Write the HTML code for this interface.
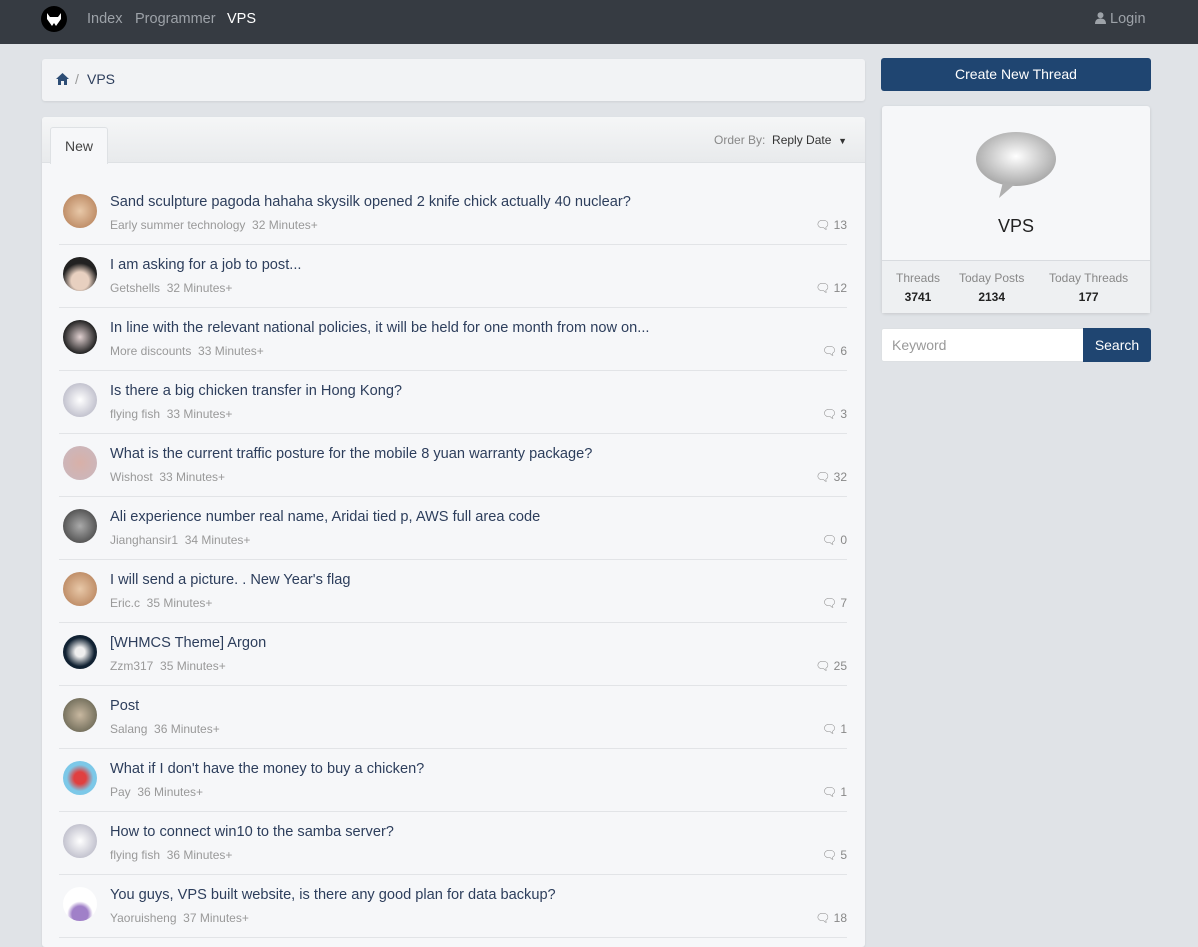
<!DOCTYPE html>
<html style="overflow:hidden;height:928px"><head><meta charset="utf-8"><style>
*{box-sizing:border-box;margin:0;padding:0}
body{width:1198px;height:928px;overflow:hidden;background:#e0e3e7;font-family:"Liberation Sans",sans-serif;font-size:14px;color:#333}
.nav{height:44px;background:#363b42;position:relative}
.logo{position:absolute;left:41px;top:6px;width:26px;height:26px;border-radius:50%;background:#000}
.nav a{position:absolute;top:11px;font-size:14.5px;color:#9da2a8;text-decoration:none}
.bc{position:absolute;left:42px;top:59px;width:823px;height:42px;background:#f2f3f5;border-radius:3px;box-shadow:0 1px 2px rgba(0,0,0,.08)}
.list{position:absolute;left:42px;top:117px;width:823px;height:830px;background:#f6f7f9;border-radius:3px;box-shadow:0 1px 2px rgba(0,0,0,.08)}
.lh{height:46px;background:linear-gradient(#f5f6f7,#e8eaec);border-bottom:1px solid #dee1e4;position:relative;border-radius:3px 3px 0 0}
.tab{position:absolute;left:8px;top:10px;width:58px;height:37px;background:#f6f7f9;border:1px solid #dee1e4;border-bottom:none;border-radius:3px 3px 0 0;font-size:14px;color:#444;text-align:center;line-height:36px}
.ob{position:absolute;right:18px;top:16px;font-size:12px;color:#888}
.ob b{font-weight:normal;color:#333}
.row{position:absolute;left:17px;width:788px;height:63px;border-bottom:1px solid #e2e4e7}
.av{position:absolute;left:4px;top:12px;width:34px;height:34px;border-radius:50%}
.t{position:absolute;left:51px;top:12px;font-size:14.6px;color:#2d3e5c;white-space:nowrap}
.m{position:absolute;left:51px;top:36px;font-size:12px;color:#999}
.c{position:absolute;right:0;top:36px;font-size:12px;color:#888}
.btn{position:absolute;left:881px;top:58px;width:270px;height:33px;background:#1f4571;color:#fff;font-size:14px;text-align:center;line-height:32px;border-radius:3px}
.side{position:absolute;left:882px;top:106px;width:268px;height:207px;background:#f6f7f9;border-radius:3px;box-shadow:0 1px 3px rgba(0,0,0,.12)}
.st{position:absolute;top:154px;left:0;right:0;height:53px;border-top:1px solid #d8dbdf;background:#eef0f2}
.st div{position:absolute;top:10px;text-align:center;font-size:12px;color:#888}
.st b{display:block;color:#222;font-size:12px;margin-top:5px}
.kw{position:absolute;left:881px;top:328px;width:203px;height:34px;background:#fff;border:1px solid #dde0e3;border-radius:3px 0 0 3px;font-size:14px;color:#999;padding:8px 10px}
.sb{position:absolute;left:1083px;top:328px;width:68px;height:34px;background:#1f4571;color:#fff;font-size:14px;text-align:center;line-height:34px;border-radius:0 3px 3px 0}
</style></head><body>
<div class="nav">
<div class="logo"><svg width="26" height="26" viewBox="0 0 26 26"><path d="M6 7 L9 11 L17 11 L20 7 L20 13 L15 20 L13 17 L11 20 L6 13Z" fill="#fff"/></svg></div>
<a style="left:87px">Index</a><a style="left:135px">Programmer</a><a style="left:227px;color:#fff">VPS</a>
<a style="left:1095px"><svg width="11" height="12" viewBox="0 0 11 12" style="vertical-align:-1px"><circle cx="5.5" cy="3.2" r="3" fill="#9da2a8"/><path d="M0 12 Q0 6.5 5.5 6.5 Q11 6.5 11 12Z" fill="#9da2a8"/></svg> Login</a>
</div>
<div class="bc"><svg style="position:absolute;left:14px;top:14px" width="13" height="12" viewBox="0 0 13 12"><path d="M6.5 0 L13 6 L11 6 L11 12 L8 12 L8 8 L5 8 L5 12 L2 12 L2 6 L0 6Z" fill="#2d4d75"/></svg><span style="position:absolute;left:33px;top:12px;color:#999">/</span><span style="position:absolute;left:45px;top:12px;color:#2d3e5c">VPS</span></div>
<div class="list">
<div class="lh"><div class="tab">New</div><div class="ob">Order By:&nbsp; <b>Reply Date</b> &nbsp;<span style="color:#333;font-size:9px">&#9660;</span></div></div>
</div>
<div class="btn">Create New Thread</div>
<div class="side">
<svg style="position:absolute;left:93px;top:26px" width="82" height="68" viewBox="0 0 82 68"><defs><radialGradient id="g" cx=".5" cy=".45" r=".55"><stop offset="0" stop-color="#fff"/><stop offset="1" stop-color="#a8a8a8"/></radialGradient></defs><ellipse cx="41" cy="27" rx="40" ry="27" fill="url(#g)"/><path d="M28 50 L24 66 L40 52Z" fill="#b0b0b0"/></svg>
<div style="position:absolute;top:110px;width:100%;text-align:center;font-size:18px;color:#222">VPS</div>
<div class="st"><div style="left:14px">Threads<b>3741</b></div><div style="left:77px">Today Posts<b>2134</b></div><div style="left:167px">Today Threads<b>177</b></div></div>
</div>
<div class="kw">Keyword</div><div class="sb">Search</div>
<div style="position:absolute;left:42px;top:0">
<div class="row" style="top:182px"><div class="av" style="background:radial-gradient(#e8c8a8,#b07850)"></div><div class="t">Sand sculpture pagoda hahaha skysilk opened 2 knife chick actually 40 nuclear?</div><div class="m">Early summer technology&nbsp; 32 Minutes+</div><div class="c">&#128488;&#xFE0E; 13</div></div>
<div class="row" style="top:245px"><div class="av" style="background:radial-gradient(circle at 50% 70%,#e8d0c0 30%,#222 60%)"></div><div class="t">I am asking for a job to post...</div><div class="m">Getshells&nbsp; 32 Minutes+</div><div class="c">&#128488;&#xFE0E; 12</div></div>
<div class="row" style="top:308px"><div class="av" style="background:radial-gradient(#e0d0d0,#222 70%)"></div><div class="t">In line with the relevant national policies, it will be held for one month from now on...</div><div class="m">More discounts&nbsp; 33 Minutes+</div><div class="c">&#128488;&#xFE0E; 6</div></div>
<div class="row" style="top:371px"><div class="av" style="background:radial-gradient(#fff,#aab)"></div><div class="t">Is there a big chicken transfer in Hong Kong?</div><div class="m">flying fish&nbsp; 33 Minutes+</div><div class="c">&#128488;&#xFE0E; 3</div></div>
<div class="row" style="top:434px"><div class="av" style="background:radial-gradient(#d8b0a8,#c8b8c0)"></div><div class="t">What is the current traffic posture for the mobile 8 yuan warranty package?</div><div class="m">Wishost&nbsp; 33 Minutes+</div><div class="c">&#128488;&#xFE0E; 32</div></div>
<div class="row" style="top:497px"><div class="av" style="background:radial-gradient(#aaa,#333)"></div><div class="t">Ali experience number real name, Aridai tied p, AWS full area code</div><div class="m">Jianghansir1&nbsp; 34 Minutes+</div><div class="c">&#128488;&#xFE0E; 0</div></div>
<div class="row" style="top:560px"><div class="av" style="background:radial-gradient(#e8c8a8,#b07850)"></div><div class="t">I will send a picture. . New Year's flag</div><div class="m">Eric.c&nbsp; 35 Minutes+</div><div class="c">&#128488;&#xFE0E; 7</div></div>
<div class="row" style="top:623px"><div class="av" style="background:radial-gradient(#eee 20%,#123 60%)"></div><div class="t">[WHMCS Theme] Argon</div><div class="m">Zzm317&nbsp; 35 Minutes+</div><div class="c">&#128488;&#xFE0E; 25</div></div>
<div class="row" style="top:686px"><div class="av" style="background:radial-gradient(#c8b8a0,#554)"></div><div class="t">Post</div><div class="m">Salang&nbsp; 36 Minutes+</div><div class="c">&#128488;&#xFE0E; 1</div></div>
<div class="row" style="top:749px"><div class="av" style="background:radial-gradient(#e04040 25%,#7cc8e8 55%)"></div><div class="t">What if I don't have the money to buy a chicken?</div><div class="m">Pay&nbsp; 36 Minutes+</div><div class="c">&#128488;&#xFE0E; 1</div></div>
<div class="row" style="top:812px"><div class="av" style="background:radial-gradient(#fff,#aab)"></div><div class="t">How to connect win10 to the samba server?</div><div class="m">flying fish&nbsp; 36 Minutes+</div><div class="c">&#128488;&#xFE0E; 5</div></div>
<div class="row" style="top:875px"><div class="av" style="background:radial-gradient(circle at 50% 80%,#a080c8 25%,#fff 40%)"></div><div class="t">You guys, VPS built website, is there any good plan for data backup?</div><div class="m">Yaoruisheng&nbsp; 37 Minutes+</div><div class="c">&#128488;&#xFE0E; 18</div></div>
</div>
</body></html>
